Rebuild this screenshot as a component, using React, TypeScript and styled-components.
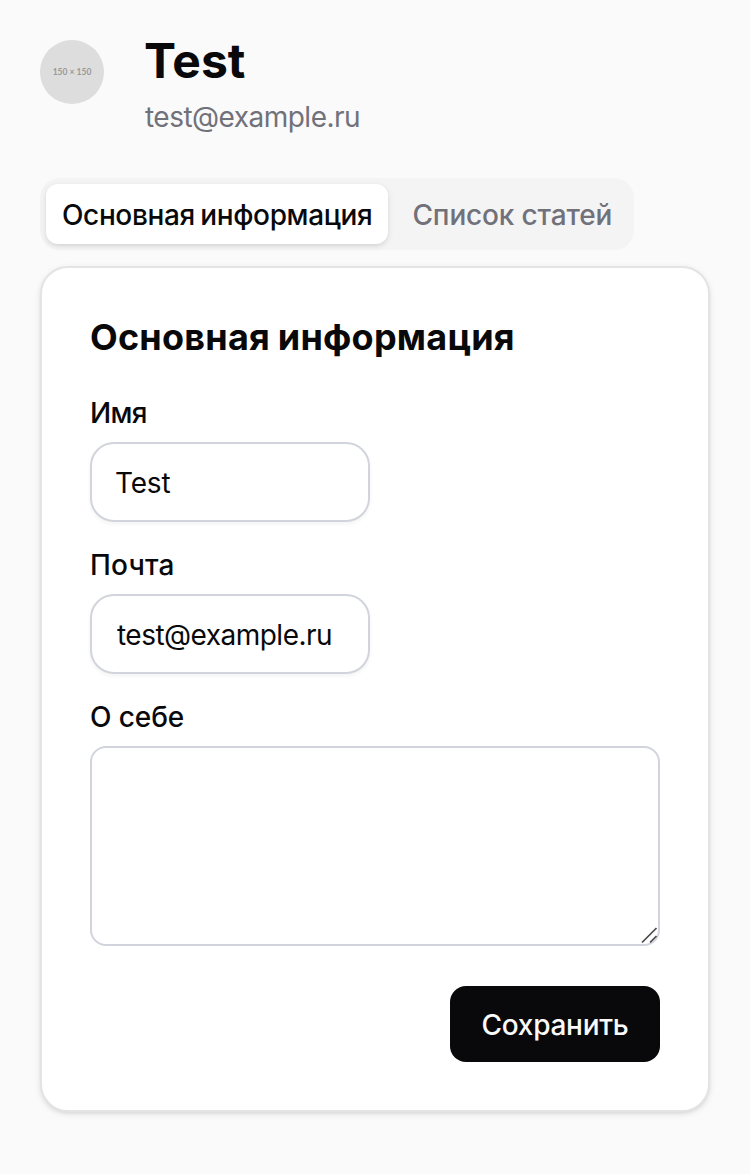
import React from "react";
import styled, { createGlobalStyle } from "styled-components";

const GlobalStyle = createGlobalStyle`
  *, *::before, *::after { box-sizing: border-box; }
  body {
    margin: 0;
    background: #fafafa;
    color: #09090b;
    font-family: Inter, "Liberation Sans", sans-serif;
    font-size: 28px;
    line-height: 40px;
  }
`;

const Page = styled.main`
  min-height: 1174px;
  padding: 36px 40px 62px;
`;

const Profile = styled.header`
  display: flex;
  align-items: flex-start;
  gap: 40px;
  height: 142px;
`;

const Avatar = styled.div`
  display: flex;
  align-items: center;
  justify-content: center;
  width: 64px;
  height: 64px;
  margin-top: 4px;
  border-radius: 50%;
  background: #dddddd;
  color: #999999;
  font: 700 8.5px/12px Lato, sans-serif;
`;

const Name = styled.h1`
  margin: 0;
  font-size: 48px;
  font-weight: 700;
  line-height: 50px;
`;

const Email = styled.p`
  margin: 11px 0 0;
  padding-left: 1px;
  color: #71717a;
  letter-spacing: -0.52px;
`;

const TabList = styled.div`
  display: flex;
  width: 594px;
  height: 72px;
  padding: 6px;
  border-radius: 20px;
  background: #f4f4f5;
`;

const Tab = styled.button<{ $active?: boolean }>`
  flex: 0 0 ${(p) => (p.$active ? 342 : 240)}px;
  height: 60px;
  padding: 1px ${(p) => (p.$active ? 16 : 24)}px 0;
  border: 0;
  border-radius: 12px;
  background: ${(p) => (p.$active ? "#ffffff" : "transparent")};
  box-shadow: ${(p) =>
    p.$active ? "0 2px 6px rgba(0,0,0,.1), 0 2px 4px -2px rgba(0,0,0,.1)" : "none"};
  color: ${(p) => (p.$active ? "#09090b" : "#71717a")};
  font: inherit;
  font-weight: 500;
  letter-spacing: ${(p) => (p.$active ? "-0.37px" : "-0.15px")};
  word-spacing: ${(p) => (p.$active ? "-1.6px" : "0")};
  text-align: left;
  white-space: nowrap;
`;

const Card = styled.form`
  display: flex;
  flex-direction: column;
  height: 846px;
  margin-top: 16px;
  padding: 45px 48px 48px;
  border: 2px solid #e4e4e7;
  border-radius: 28px;
  background: #ffffff;
  box-shadow: 0 2px 6px rgba(0, 0, 0, 0.1), 0 2px 4px -2px rgba(0, 0, 0, 0.1);
`;

const Title = styled.h2`
  margin: 0 0 32px;
  font-size: 36px;
  font-weight: 700;
  line-height: 48px;
  letter-spacing: 0.22px;
  word-spacing: -1px;
  white-space: nowrap;
`;

const Field = styled.div`
  display: flex;
  flex-direction: column;
  gap: 9px;
  margin-bottom: 23px;
`;

const Label = styled.label<{ $tracking?: number }>`
  font-weight: 500;
  letter-spacing: ${(p) => p.$tracking ?? 0}px;
`;

const Input = styled.input<{ $tracking: number; $indent: number }>`
  width: 280px;
  height: 80px;
  padding: 1px 22px 0 ${(p) => p.$indent}px;
  border: 2px solid #d1d5db;
  border-radius: 24px;
  outline: none;
  background: #ffffff;
  box-shadow: 0 2px 4px rgba(0, 0, 0, 0.05);
  color: #09090b;
  font: inherit;
  letter-spacing: ${(p) => p.$tracking}px;
`;

const AreaWrap = styled.div`
  position: relative;
  height: 200px;
`;

const TextArea = styled.textarea`
  display: block;
  width: 100%;
  height: 100%;
  padding: 16px 24px;
  border: 2px solid #d1d5db;
  border-radius: 16px;
  outline: none;
  resize: none;
  background: #ffffff;
  font: inherit;
`;

const Grip = styled.svg`
  position: absolute;
  right: 1px;
  bottom: 1px;
`;

const Save = styled.button`
  align-self: flex-end;
  width: 210px;
  height: 76px;
  margin-top: 17px;
  padding: 1px 0 0;
  border: 0;
  border-radius: 16px;
  background: #09090b;
  color: #fafafa;
  font: inherit;
  font-weight: 500;
  letter-spacing: -0.25px;
`;

export default function App() {
  return (
    <Page>
      <GlobalStyle />
      <Profile>
        <Avatar>150 × 150</Avatar>
        <div>
          <Name>Test</Name>
          <Email>test@example.ru</Email>
        </div>
      </Profile>
      <TabList role="tablist">
        <Tab role="tab" $active>Основная информация</Tab>
        <Tab role="tab">Список статей</Tab>
      </TabList>
      <Card>
        <Title>Основная информация</Title>
        <Field>
          <Label htmlFor="name" $tracking={-0.7}>Имя</Label>
          <Input id="name" $tracking={-0.2} $indent={23} defaultValue="Test" />
        </Field>
        <Field>
          <Label htmlFor="email" $tracking={0.2}>Почта</Label>
          <Input id="email" $tracking={-0.52} $indent={25} defaultValue="test@example.ru" />
        </Field>
        <Field>
          <Label htmlFor="about" $tracking={-0.1}>О себе</Label>
          <AreaWrap>
            <TextArea id="about" />
            <Grip width="18" height="18" viewBox="0 0 18 18" fill="none" stroke="#4a4a4a" strokeWidth="1.7">
              <path d="M1 15.5 15.5 1M9 15.5 15.5 9" />
            </Grip>
          </AreaWrap>
        </Field>
        <Save type="button">Сохранить</Save>
      </Card>
    </Page>
  );
}
